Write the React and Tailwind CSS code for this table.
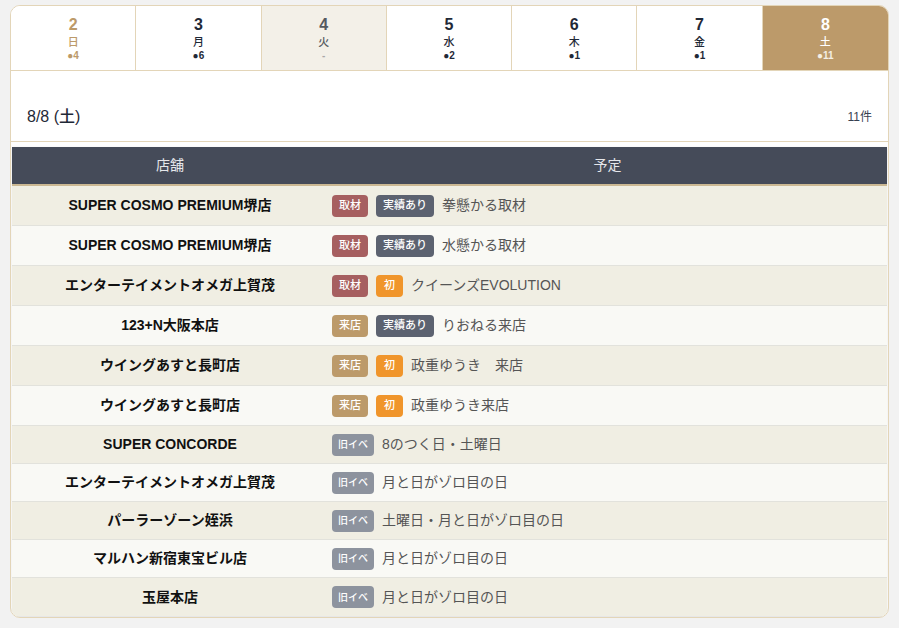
import React from "react";

const tabs = [
  { d: "2", w: "日", c: "●4", t: "sun" },
  { d: "3", w: "月", c: "●6", t: "n" },
  { d: "4", w: "火", c: "-", t: "off" },
  { d: "5", w: "水", c: "●2", t: "n" },
  { d: "6", w: "木", c: "●1", t: "n" },
  { d: "7", w: "金", c: "●1", t: "n" },
  { d: "8", w: "土", c: "●11", t: "sel" },
];

const badgeCls = {
  取材: "bg-[#a65f60] text-[11px] px-[7px]",
  実績あり: "bg-[#5c6270] text-[11px] px-[7px]",
  初: "bg-[#f0952b] text-[11px] px-[8px]",
  来店: "bg-[#bc9a6a] text-[11px] px-[7px]",
  旧イベ: "bg-[#8d939e] text-[10px] px-1.5",
};

const rows = [
  ["SUPER COSMO PREMIUM堺店", ["取材", "実績あり"], "拳懸かる取材"],
  ["SUPER COSMO PREMIUM堺店", ["取材", "実績あり"], "水懸かる取材"],
  ["エンターテイメントオメガ上賀茂", ["取材", "初"], "クイーンズEVOLUTION"],
  ["123+N大阪本店", ["来店", "実績あり"], "りおねる来店"],
  ["ウイングあすと長町店", ["来店", "初"], "政重ゆうき　来店"],
  ["ウイングあすと長町店", ["来店", "初"], "政重ゆうき来店"],
  ["SUPER CONCORDE", ["旧イベ"], "8のつく日・土曜日"],
  ["エンターテイメントオメガ上賀茂", ["旧イベ"], "月と日がゾロ目の日"],
  ["パーラーゾーン姪浜", ["旧イベ"], "土曜日・月と日がゾロ目の日"],
  ["マルハン新宿東宝ビル店", ["旧イベ"], "月と日がゾロ目の日"],
  ["玉屋本店", ["旧イベ"], "月と日がゾロ目の日"],
];

function Tab({ tab, last }) {
  const base = "flex flex-col items-center justify-center h-full";
  let cls = "bg-white";
  let num = "text-[#1f2937]";
  let day = "text-[#1f2937]";
  let cnt = "text-[#1f2937]";
  if (tab.t === "sun") {
    num = "text-[#bc9a6a]";
    day = "text-[#bc9a6a]";
    cnt = "text-[#bc9a6a]";
  } else if (tab.t === "off") {
    cls = "bg-[#f3f0e8]";
    num = "text-[#555a60]";
    day = "text-[#555a60]";
    cnt = "text-[#a8a8a8]";
  } else if (tab.t === "sel") {
    cls = "bg-[#bc9a6a]";
    num = "text-white";
    day = "text-white";
    cnt = "text-[#f5efe4]";
  }
  return (
    <div className={`${base} ${cls} ${last ? "" : "border-r border-[#e3d5b8]"}`}>
      <div className={`text-[16px] leading-[20px] font-bold ${num}`}>{tab.d}</div>
      <div className={`text-[11px] leading-[14px] font-medium ${day}`}>{tab.w}</div>
      <div className={`text-[10px] leading-[13px] font-bold ${cnt}`}>{tab.c}</div>
    </div>
  );
}

export default function App() {
  return (
    <div className="min-h-screen bg-[#f2f2f2] pt-[5px] px-[10px] font-['Liberation_Sans','Noto_Sans_CJK_JP',sans-serif]">
      <div className="w-[879px] border border-[#e3d5b8] rounded-[10px] overflow-hidden bg-white">
        <div className="grid grid-cols-7 h-[65px] border-b border-[#e3d5b8]">
          {tabs.map((t, i) => (
            <Tab key={i} tab={t} last={i === tabs.length - 1} />
          ))}
        </div>
        <div className="flex items-center justify-between pt-[34px] pb-[12px] pl-4 pr-4 border-b border-[#e3d5b8]">
          <div className="text-[16px] leading-[24px] font-medium text-[#1f2937]">8/8 (土)</div>
          <div className="text-[12px] leading-[24px] text-[#374151]">11件</div>
        </div>
        <div className="mt-[5px] mx-px mb-px shadow-sm">
          <div className="flex h-[39px] bg-[#454b59] border-b-2 border-[#cbb893] text-[14px] text-[#e5e7eb]">
            <div className="w-[316px] flex items-center justify-center">店舗</div>
            <div className="flex-1 flex items-center justify-center">予定</div>
          </div>
          {rows.map((r, i) => (
            <div
              key={i}
              className={`flex items-center ${i < 6 ? "h-[40px]" : "h-[38px]"} ${
                i % 2 === 0 ? "bg-[#f0eee3]" : "bg-[#f9f9f5]"
              } ${i < rows.length - 1 ? "border-b border-[#e2e2dc]" : ""}`}
            >
              <div className="w-[316px] text-center text-[14px] font-bold text-[#111111]">{r[0]}</div>
              <div className="flex-1 flex items-center gap-2 pl-1">
                {r[1].map((b) => (
                  <span
                    key={b}
                    className={`${badgeCls[b]} h-[22px] flex items-center rounded-[4px] text-white font-medium`}
                  >
                    {b}
                  </span>
                ))}
                <span className="text-[14px] text-[#555555]">{r[2]}</span>
              </div>
            </div>
          ))}
        </div>
      </div>
    </div>
  );
}
